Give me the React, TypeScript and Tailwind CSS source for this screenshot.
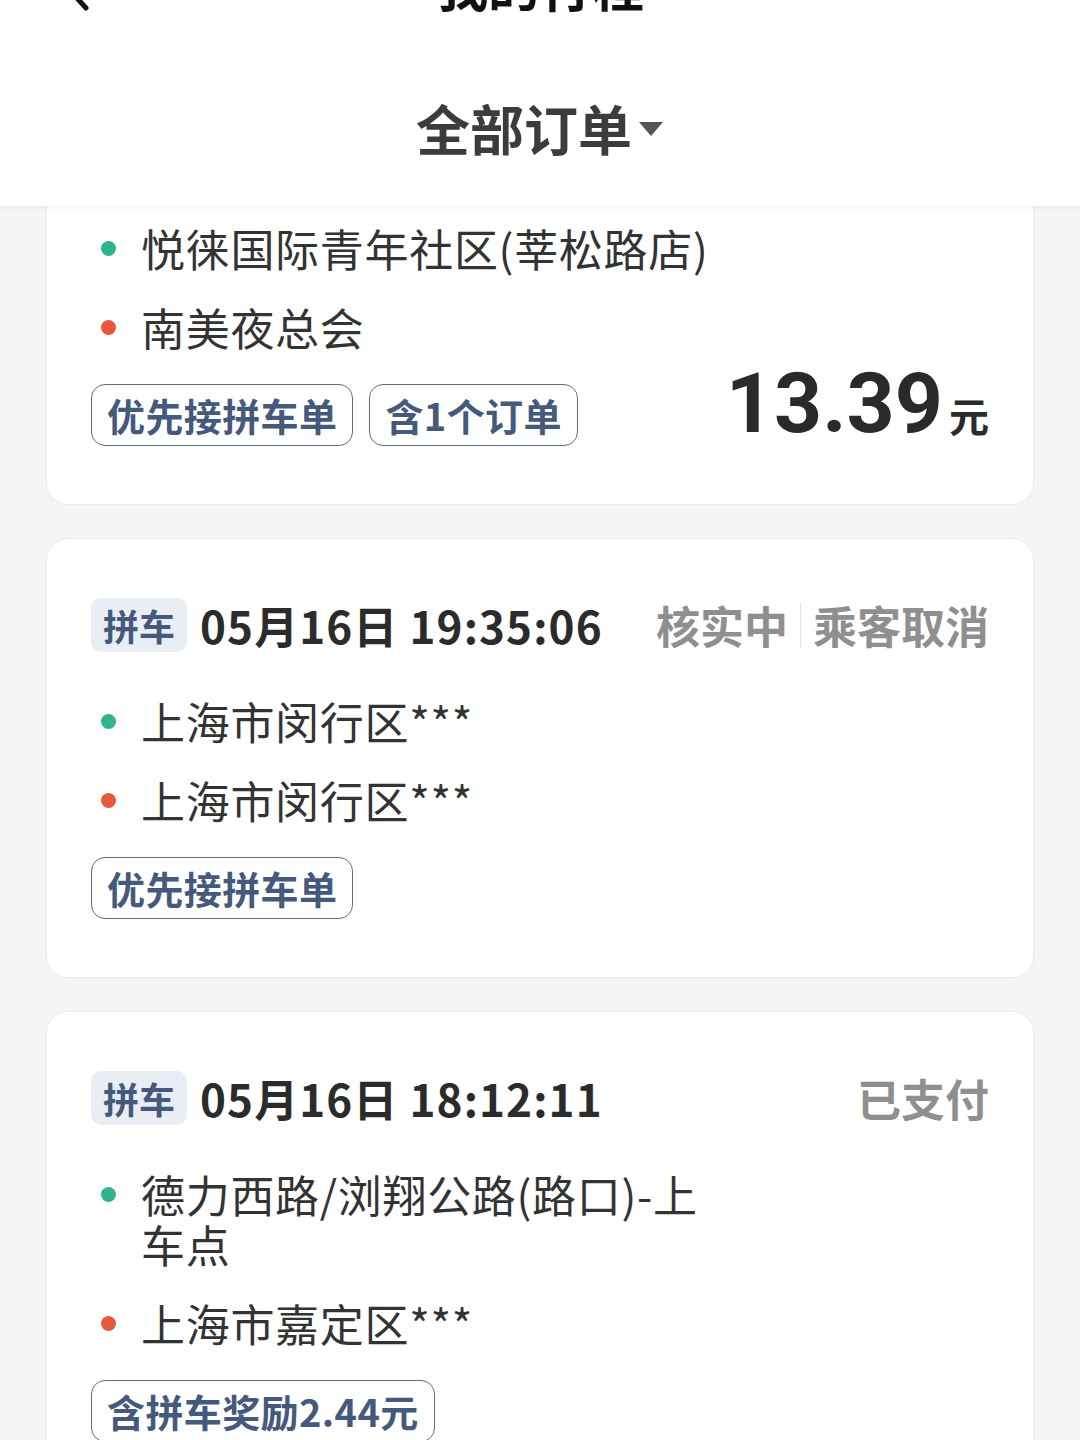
import React from 'react';

type Trip = {
  time?: string;
  status?: string[];
  from: string;
  to: string;
  tags: string[];
  price?: string;
};

const font = { fontFamily: '"Noto Sans CJK SC", "Noto Sans", sans-serif' };

const trips: Trip[] = [
  {
    from: '悦徕国际青年社区(莘松路店)',
    to: '南美夜总会',
    tags: ['优先接拼车单', '含1个订单'],
    price: '13.39',
  },
  {
    time: '05月16日 19:35:06',
    status: ['核实中', '乘客取消'],
    from: '上海市闵行区***',
    to: '上海市闵行区***',
    tags: ['优先接拼车单'],
  },
  {
    time: '05月16日 18:12:11',
    status: ['已支付'],
    from: '德力西路/浏翔公路(路口)-上车点',
    to: '上海市嘉定区***',
    tags: ['含拼车奖励2.44元'],
  },
];

const Place = ({ text, color }: { text: string; color: string }) => (
  <div className="flex items-start">
    <div className="w-[53px] shrink-0 flex pt-[18px] pl-[10px]">
      <span className={`w-[15px] h-[15px] rounded-full ${color}`} />
    </div>
    <div className="-ml-[3px] max-w-[572px] text-[44px] leading-[50px] tracking-[0.7px] text-[#333333]">{text}</div>
  </div>
);

const Tag = ({ text }: { text: string }) => (
  <span className="h-[62px] px-[15px] flex items-center rounded-[14px] border-[1.5px] border-[#5d6d88] text-[38px] font-bold text-[#44597c] leading-none tracking-[0.4px]">
    {text}
  </span>
);

const TripCard = ({ trip, first }: { trip: Trip; first?: boolean }) => (
  <div
    className={`mx-[46px] bg-white border border-[#ececec] px-[44px] pb-[58px] ${
      first ? 'rounded-b-[22px] border-t-0 pt-[17px]' : 'rounded-[22px] pt-[59px]'
    }`}
  >
    {trip.time && (
      <div className="h-[54px] flex items-center justify-between mb-[44px] leading-none">
        <div className="flex items-center">
          <span className="h-[54px] px-[12px] flex items-center rounded-[10px] bg-[#e9eef4] text-[36px] font-bold text-[#44597c]">
            拼车
          </span>
          <span className="ml-[13px] text-[44px] font-bold text-[#2b2b2b] tracking-[1.1px]">{trip.time}</span>
        </div>
        <div className="flex items-center text-[44px] font-bold text-[#8f8f8f]">
          {trip.status!.map((s, i) => (
            <React.Fragment key={s}>
              {i > 0 && <span className="mx-[12px] w-px h-[46px] bg-[#e3e3e3]" />}
              <span>{s}</span>
            </React.Fragment>
          ))}
        </div>
      </div>
    )}
    <div className="flex flex-col gap-[29px]">
      <Place text={trip.from} color="bg-[#2fb48f]" />
      <Place text={trip.to} color="bg-[#e8583c]" />
    </div>
    <div className="mt-[32px] flex items-center justify-between">
      <div className="flex gap-[16px]">
        {trip.tags.map((t) => (
          <Tag key={t} text={t} />
        ))}
      </div>
      {trip.price && (
        <div className="flex items-baseline -mt-[22px] text-[#2a2a2a]">
          <span className="text-[84px] font-bold leading-none" style={{ fontFamily: 'Roboto, sans-serif' }}>
            {trip.price}
          </span>
          <span className="ml-[6px] text-[40px] font-bold">元</span>
        </div>
      )}
    </div>
  </div>
);

export default function App() {
  return (
    <div className="w-[1080px] h-[1440px] overflow-hidden bg-[#f4f5f6]" style={font}>
      {/* 顶部导航 */}
      <div className="relative z-10 bg-white h-[206px] overflow-hidden shadow-[0_2px_6px_rgba(0,0,0,0.06)]">
        <div className="h-[11px] relative flex justify-center">
          <svg className="absolute left-[56px] -top-[40px]" width="40" height="52" viewBox="0 0 40 52">
            <path d="M30 4 L10 26 L30 48" fill="none" stroke="#111" strokeWidth="5" strokeLinecap="round" strokeLinejoin="round" />
          </svg>
          <span className="-mt-[41px] text-[52px] leading-[52px] font-bold text-[#111111]">我的行程</span>
        </div>
        <div className="flex items-center justify-center pt-[90px]">
          <span className="text-[54px] font-bold leading-none text-[#3c3c3c]">全部订单</span>
          <svg className="ml-[6px] mt-[2px]" width="26" height="16" viewBox="0 0 26 16">
            <path d="M1 1 H25 L13 15 Z" fill="#555" />
          </svg>
        </div>
      </div>

      <div className="flex flex-col gap-[33px]">
        {trips.map((t, i) => (
          <TripCard key={i} trip={t} first={i === 0} />
        ))}
      </div>
    </div>
  );
}
